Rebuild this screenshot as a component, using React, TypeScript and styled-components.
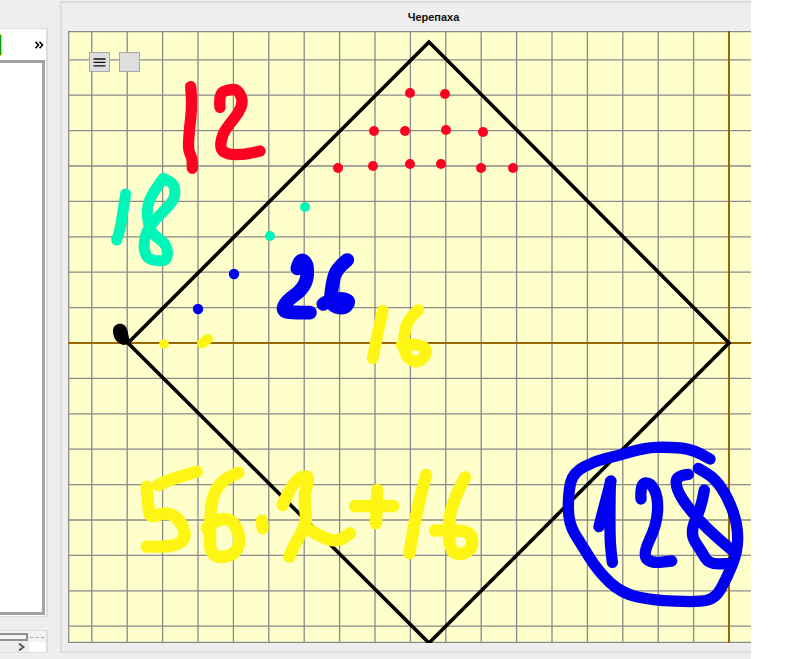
import React from 'react';
import styled, { createGlobalStyle } from 'styled-components';

const GlobalStyle = createGlobalStyle`
  html, body {
    margin: 0;
    padding: 0;
    background: #fff;
    font-family: "Liberation Sans", Arial, sans-serif;
  }
`;

const Page = styled.div`
  display: flex;
  width: 751px;
  height: 659px;
  background: #eeeeee;
  overflow: hidden;
`;

const LeftColumn = styled.div`
  display: flex;
  flex-direction: column;
  width: 48px;
  flex-shrink: 0;
  padding-top: 28px;
  box-sizing: border-box;
`;

const SidePanel = styled.div`
  display: flex;
  flex-direction: column;
  height: 589px;
  box-sizing: border-box;
  background: #fff;
  border: 1px solid #dddddd;
  border-left: none;
  border-right-width: 2px;
  padding-right: 1px;
  padding-bottom: 1px;
`;

const SideToolbar = styled.div`
  display: flex;
  align-items: flex-start;
  justify-content: space-between;
  height: 31px;
  flex-shrink: 0;
  padding: 5px 1px 0 0;
  box-sizing: border-box;
`;

const GreenTool = styled.div`
  width: 1px;
  height: 20px;
  background: #00a000;
  border: 1px solid #e6e600;
  border-left: none;
`;

const MoreButton = styled.svg`
  margin-top: 7px;
`;

const SideList = styled.div`
  flex: 1;
  background: #fff;
  border: 3px solid #a3a3a3;
  border-left: none;
`;

const ScrollPanel = styled.div`
  display: flex;
  flex-direction: column;
  height: 23px;
  margin-top: 13px;
  box-sizing: border-box;
  border: 1px solid #dddddd;
  border-left: none;
  border-right-width: 2px;
  background: #f2f2f2;
  padding-top: 2px;
`;

const ScrollTrack = styled.div`
  display: flex;
  align-items: center;
  height: 8px;
`;

const ScrollThumb = styled.div`
  width: 28px;
  height: 8px;
  box-sizing: border-box;
  background: #f4f4f4;
  border: 2px solid #8f8f8f;
  border-left: none;
`;

const ScrollDash = styled.div`
  flex: 1;
  border-top: 1px dashed #a5a5a5;
  margin: 0 2px;
`;

const ScrollRow = styled.div`
  display: flex;
  flex: 1;
  margin-top: 1px;
`;

const ScrollArrow = styled.div`
  display: flex;
  align-items: center;
  justify-content: flex-end;
  width: 29px;
  padding-right: 4px;
  box-sizing: border-box;
  background: #eeeeee;
`;

const ScrollBlank = styled.div`
  flex: 1;
  background: #fff;
`;

const TurtleWindow = styled.div`
  display: flex;
  flex-direction: column;
  width: 691px;
  height: 652px;
  margin: 1px 0 0 12px;
  box-sizing: border-box;
  border: 2px solid #dddddd;
  border-right: none;
`;

const TitleBar = styled.div`
  display: flex;
  align-items: center;
  justify-content: center;
  height: 28px;
  padding: 0 0 0 54px;
  box-sizing: border-box;
  flex-shrink: 0;
  font-size: 11px;
  font-weight: bold;
  color: #111;
`;

const CanvasArea = styled.div`
  position: relative;
  width: 683px;
  height: 612px;
  margin-left: 6px;
  background: #ffffcc;
`;

const CanvasSvg = styled.svg`
  display: block;
`;

const CanvasTools = styled.div`
  position: absolute;
  left: 21px;
  top: 21px;
  display: flex;
  gap: 9px;
`;

const CanvasButton = styled.div`
  display: flex;
  align-items: center;
  justify-content: center;
  width: 21px;
  height: 20px;
  box-sizing: border-box;
  background: #dedede;
  border: 1px solid #a8a8a8;
`;

type Pt = [number, number];

// smooths a hand traced stroke through midpoints
const smooth = (pts: Pt[]) => {
  let d = `M${pts[0][0]} ${pts[0][1]}`;
  for (let i = 1; i < pts.length - 1; i++) {
    const mx = (pts[i][0] + pts[i + 1][0]) / 2;
    const my = (pts[i][1] + pts[i + 1][1]) / 2;
    d += ` Q${pts[i][0]} ${pts[i][1]} ${mx} ${my}`;
  }
  const last = pts[pts.length - 1];
  return `${d} L${last[0]} ${last[1]}`;
};

interface InkProps {
  x: number;
  y: number;
  color: string;
  width: number;
  strokes: Pt[][];
}

// strokes are in 3x crop units, x/y is the crop origin
const Ink: React.FC<InkProps> = ({ x, y, color, width, strokes }) => (
  <g
    transform={`translate(${x} ${y}) scale(${1 / 3})`}
    fill="none"
    stroke={color}
    strokeWidth={width}
    strokeLinecap="round"
    strokeLinejoin="round"
  >
    {strokes.map((s, i) => (
      <path key={i} d={smooth(s)} />
    ))}
  </g>
);

const RED = '#ff0022';
const TEAL = '#00f5b8';
const BLUE = '#0000f0';
const YELLOW = '#fff514';

const red12: Pt[][] = [
  [[272, 50], [277, 100], [268, 180], [264, 240], [277, 265], [277, 295]],
  [[360, 112], [356, 72], [385, 58], [414, 58], [430, 95], [415, 130], [390, 160], [366, 195], [360, 238], [385, 254], [435, 254], [480, 243]],
];

const teal18: Pt[][] = [
  [[77, 372], [68, 430], [60, 480], [50, 510]],
  [[190, 325], [160, 365], [140, 410], [145, 470], [165, 500], [200, 522], [204, 570], [170, 574], [136, 562], [130, 510], [150, 465], [190, 425], [226, 385], [224, 342], [190, 325]],
];

const blue26: Pt[][] = [
  [[592, 85], [600, 55], [622, 70], [622, 120], [600, 155], [560, 182], [545, 215], [590, 218], [630, 218]],
  [[742, 60], [710, 85], [697, 130], [690, 195], [730, 207], [750, 185], [730, 175], [690, 180], [670, 192]],
];

const yellow16: Pt[][] = [
  [[848, 212], [835, 270], [818, 355]],
  [[955, 210], [925, 235], [910, 290], [915, 350], [950, 370], [980, 345], [977, 320], [940, 312], [905, 315]],
];

const formula: Pt[][] = [
  [[200, 35], [130, 55], [85, 75]],
  [[50, 80], [55, 140], [60, 175], [110, 155], [152, 180], [170, 235], [130, 260], [50, 260]],
  [[325, 38], [280, 55], [245, 110], [240, 200], [240, 290], [300, 292], [330, 260], [325, 210], [300, 175], [260, 180], [230, 205]],
  [[396, 182], [398, 205]],
  [[458, 135], [490, 60], [542, 42], [520, 110], [532, 190], [495, 250], [478, 290]],
  [[530, 205], [590, 240], [630, 242], [660, 220]],
  [[675, 138], [790, 138]],
  [[742, 90], [738, 190]],
  [[888, 45], [860, 150], [838, 280]],
  [[1005, 52], [975, 110], [955, 180], [960, 278], [1000, 284], [1030, 260], [1022, 215], [960, 210], [915, 212]],
];

const blue128: Pt[][] = [
  [[465, 72], [415, 42], [340, 36], [270, 38], [190, 62], [120, 78], [55, 112], [40, 170], [40, 265], [80, 330], [130, 410], [200, 475], [290, 495], [430, 502], [482, 490], [515, 430], [548, 350], [548, 270], [520, 190], [480, 130], [430, 100]],
  [[168, 138], [150, 205], [132, 275]],
  [[166, 140], [163, 300], [172, 382]],
  [[258, 192], [255, 145], [288, 142], [310, 190], [305, 270], [262, 360], [290, 385], [350, 378]],
  [[400, 118], [362, 122], [365, 165], [400, 220], [460, 285], [530, 345]],
  [[448, 165], [440, 215], [403, 295], [440, 350], [462, 388], [530, 385]],
];

const redDots: Pt[] = [
  [410, 93], [445, 94], [374, 131], [405, 131], [446, 130], [483, 132],
  [338, 168], [373, 166], [410, 164], [441, 164], [481, 168], [513, 168],
];
const tealDots: Pt[] = [[305, 207], [270, 236]];
const blueDots: Pt[] = [[234, 274], [198, 309]];

const STEP = 35.4;
const verticals = Array.from({ length: 18 }, (_, i) => 729 - (i + 1) * STEP);
const horizontals = Array.from({ length: 17 }, (_, i) => 343 + (i - 8) * STEP).filter((v) => v !== 343);

const TurtleCanvas: React.FC = () => (
  <CanvasSvg width="683" height="612" viewBox="68 31 683 612">
    <g stroke="#8a8a8a" strokeWidth="1.3">
      {verticals.map((x) => (
        <line key={x} x1={x} y1="31" x2={x} y2="643" />
      ))}
      {horizontals.map((y) => (
        <line key={y} x1="68" y1={y} x2="751" y2={y} />
      ))}
      <line x1="68.7" y1="31" x2="68.7" y2="643" />
      <line x1="68" y1="31.7" x2="751" y2="31.7" />
      <line x1="68" y1="642.5" x2="751" y2="642.5" />
    </g>
    <g stroke="#9c6600" strokeWidth="2">
      <line x1="68" y1="343" x2="751" y2="343" />
      <line x1="729" y1="31" x2="729" y2="643" />
    </g>
    <polygon points="128,343 429,42 729,343 429,643" fill="none" stroke="#000" strokeWidth="3.6" />
    <path d="M113 331 C113 325 118 323 122 324 C127 325 128 332 129 338 L131 344 L123 345 C117 343 113 338 113 331 Z" fill="#000" />

    {redDots.map(([x, y]) => (
      <circle key={`${x}-${y}`} cx={x} cy={y} r="5" fill={RED} />
    ))}
    {tealDots.map(([x, y]) => (
      <circle key={`${x}-${y}`} cx={x} cy={y} r="5" fill={TEAL} />
    ))}
    {blueDots.map(([x, y]) => (
      <circle key={`${x}-${y}`} cx={x} cy={y} r="5.2" fill={BLUE} />
    ))}
    <circle cx="164" cy="344" r="4.8" fill={YELLOW} />
    <line x1="202" y1="343.5" x2="208" y2="339" stroke={YELLOW} strokeWidth="10" strokeLinecap="round" />

    <Ink x={100} y={70} color={RED} width={34} strokes={red12} />
    <Ink x={100} y={70} color={TEAL} width={33} strokes={teal18} />
    <Ink x={100} y={240} color={BLUE} width={41} strokes={blue26} />
    <Ink x={100} y={240} color={YELLOW} width={35} strokes={yellow16} />
    <Ink x={130} y={460} color={YELLOW} width={37} strokes={formula} />
    <Ink x={555} y={435} color={BLUE} width={34} strokes={blue128} />
  </CanvasSvg>
);

const App: React.FC = () => (
  <>
    <GlobalStyle />
    <Page>
      <LeftColumn>
        <SidePanel>
          <SideToolbar>
            <GreenTool />
            <MoreButton width="9" height="8" viewBox="0 0 9 8">
              <path d="M0.5 0.8 L3.5 4 L0.5 7.2 M4.5 0.8 L7.5 4 L4.5 7.2" fill="none" stroke="#000" strokeWidth="1.6" />
            </MoreButton>
          </SideToolbar>
          <SideList />
        </SidePanel>
        <ScrollPanel>
          <ScrollTrack>
            <ScrollThumb />
            <ScrollDash />
          </ScrollTrack>
          <ScrollRow>
            <ScrollArrow>
              <svg width="7" height="8" viewBox="0 0 7 8">
                <path d="M1 0.5 L5.5 4 L1 7.5" fill="none" stroke="#555" strokeWidth="1.8" />
              </svg>
            </ScrollArrow>
            <ScrollBlank />
          </ScrollRow>
        </ScrollPanel>
      </LeftColumn>
      <TurtleWindow>
        <TitleBar>Черепаха</TitleBar>
        <CanvasArea>
          <TurtleCanvas />
          <CanvasTools>
            <CanvasButton>
              <svg width="13" height="9" viewBox="0 0 13 9">
                <path d="M0.5 1H12.5M0.5 4.4H12.5M0.5 7.8H12.5" stroke="#111" strokeWidth="1.3" fill="none" />
              </svg>
            </CanvasButton>
            <CanvasButton />
          </CanvasTools>
        </CanvasArea>
      </TurtleWindow>
    </Page>
  </>
);

export default App;
